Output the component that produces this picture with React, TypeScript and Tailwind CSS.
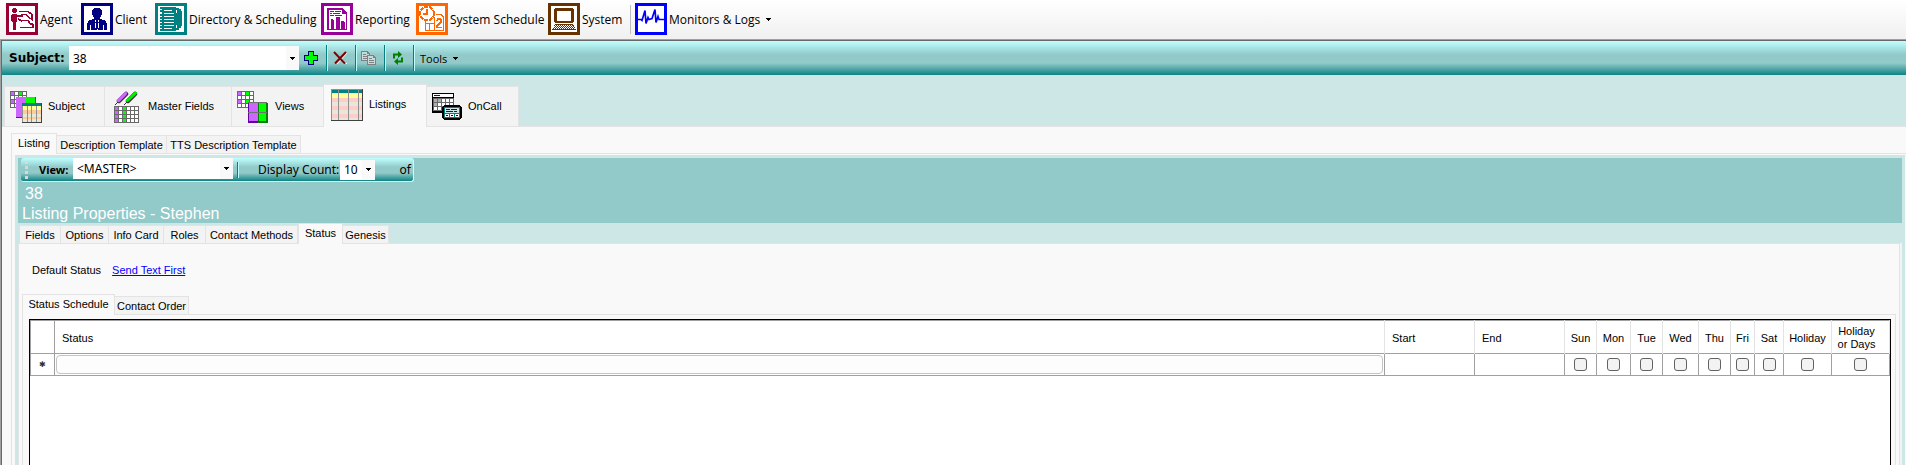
import React from "react";

type IconProps = { className?: string };

const px = { shapeRendering: "crispEdges" as const };

function AgentIcon() {
  return (
    <svg width="32" height="32" viewBox="0 0 32 32" {...px}>
      <path fill="#990033" d="M0 0h32v32H0z" />
      <path fill="#fff" d="M3 3h26v26H3z" />
      <path fill="#990033" d="M7 5h3v1h1v3h-1v1H7V9H6V6h1zM6 11h5v1h6v2h-6v5h-1v8H7v-8H6v-1H5v-6h1z" />
      <path fill="none" stroke="#990033" strokeWidth="1.6" d="M13 8.500h9l4 3v5l-3-2-3-3h-5M16 17.500h6l2 3 3 1v3H14M12 16l4 2" />
    </svg>
  );
}

function ClientIcon() {
  return (
    <svg width="32" height="32" viewBox="0 0 32 32" {...px}>
      <path fill="#000080" d="M0 0h32v32H0z" />
      <path fill="#fff" d="M3 3h26v26H3z" />
      <path fill="#000080" d="M13 5h6v1h1v1h1v5h-1v2h-1v2h2v1h3v1h1v2h1v7H6v-7h1v-2h1v-1h3v-1h2v-2h-1v-2h-1V7h1V6h1z" />
      <path fill="#fff" d="M14 17h1v1h2v-1h1v2h-1v1h1v5h-1v2h-2v-2h-1v-5h1v-1h-1z" />
      <path fill="#000080" d="M15 18h2v2h-1v7h-1zM15 20h2v6h-2z" />
      <path fill="#fff" d="M9 22h1v5H9zM22 22h1v5h-1z" />
    </svg>
  );
}

function DirectoryIcon() {
  return (
    <svg width="32" height="32" viewBox="0 0 32 32" {...px}>
      <path fill="#008080" d="M0 0h32v32H0z" />
      <path fill="#fff" d="M3 3h26v26H3z" />
      <path fill="#008080" d="M5 4h16v1h3v1h2v2h1v15h-1v2h-2v2h-3v1H5v-2h2v-1H5v-2h2v-1H5v-2h2v-1H5v-2h2v-1H5v-2h2v-1H5v-2h2V9H5V7h2V6H5z" />
      <path fill="#fff" d="M9 7h8v1H9zM9 10h10v1H9zM9 13h10v1H9zM9 16h10v1H9zM9 19h10v1H9zM9 22h10v1H9zM9 25h8v1H9z" />
      <path fill="#fff" d="M21 7h1v3h-1zM21 22h1v3h-1z" />
    </svg>
  );
}

function ReportingIcon() {
  return (
    <svg width="32" height="32" viewBox="0 0 32 32" {...px}>
      <path fill="#990099" d="M0 0h32v32H0z" />
      <path fill="#fff" d="M3 3h26v26H3z" />
      <path fill="#990099" d="M6 5h16v1h1v1h1v1h1v1h1v18H6z" />
      <path fill="#fff" d="M8 7h13v4h4v15h-1v-7h-3v7h-2V14h-3v12h-3v-9h-2v9H8z" />
      <path fill="#990099" d="M9 8h4v1H9zM14 8h6v1h-6zM9 10h2v1H9zM12 10h7v1h-7zM9 12h4v1H9zM14 12h7v1h-7zM10 16h2v10h-2zM15 14h3v12h-3zM20 18h3v8h-3zM21 6h1v5h-1z" />
    </svg>
  );
}

function ScheduleIcon() {
  return (
    <svg width="32" height="32" viewBox="0 0 32 32" {...px}>
      <path fill="#ff6600" d="M0 0h32v32H0z" />
      <path fill="#fff" d="M3 3h26v26H3z" />
      <path fill="none" stroke="#ff6600" strokeWidth="1.5" d="M9.500 18v9.500h18V14l-3-2.500h-5M18.500 14v13M13.500 20v7M9 20.500h9" />
      <circle cx="11" cy="10.500" r="7" fill="#fff" stroke="#ff6600" strokeWidth="2" strokeDasharray="4 1" />
      <path fill="#ff6600" d="M10 6h2v6H7v-2h3z" />
      <path fill="#ff6600" d="M21 15h4v1h1v4h-1v1h-1v1h-1v1h-1v1h4v1h-6v-3h1v-1h1v-1h1v-1h1v-2h-2v1h-2v-1h1z" />
    </svg>
  );
}

const keyboardDots = [0, 1, 2, 3]
  .flatMap((r) => Array.from({ length: 9 + r }, (_, c) => `M${7 - r + c * 2} ${22 + r}h1v1h-1z`))
  .join("");

function SystemIcon() {
  return (
    <svg width="32" height="32" viewBox="0 0 32 32" {...px}>
      <path fill="#663300" d="M0 0h32v32H0z" />
      <path fill="#fff" d="M3 3h26v26H3z" />
      <path fill="#663300" d="M7 5h18v1h1v13h-1v1H7v-1H6V6h1zM7 21h18v1h1v2h1v2h1v1H4v-1h1v-2h1v-2h1z" />
      <path fill="#fff" d="M9 8h14v10H9z" />
      <path fill="#fff" d={keyboardDots} />
    </svg>
  );
}

function MonitorIcon() {
  return (
    <svg width="32" height="32" viewBox="0 0 32 32">
      <path fill="#0000ff" d="M0 0h32v32H0z" />
      <path fill="#fff" d="M3 3h26v26H3z" />
      <path fill="none" stroke="#0000ff" strokeWidth="1.700" d="M3 16.500h3l1 1 3-10 1 13 2-6 1 2 3-1 3-9 1 13 2-6 1 3h5" />
    </svg>
  );
}

function PlusIcon() {
  return (
    <svg width="14" height="14" viewBox="0 0 14 14" {...px}>
      <path fill="#000080" d="M4 0h6v4h4v6h-4v4H4v-4H0V4h4z" />
      <path fill="#00ff00" d="M5 1h4v4h4v4H9v4H5V9H1V5h4z" />
    </svg>
  );
}

function DeleteIcon() {
  return (
    <svg width="15" height="14" viewBox="0 0 15 14">
      <path stroke="#fff" strokeWidth="1" d="M3 2l11 11M14 2L4 13" />
      <path stroke="#800000" strokeWidth="2" d="M1 1l11 11.500M13 1L2 12.500" />
    </svg>
  );
}

function CopyIcon() {
  return (
    <svg width="16" height="14" viewBox="0 0 16 14" {...px}>
      <path fill="#808080" d="M0 0h7v1h1v1h1v8H0z" />
      <path fill="#c3dcdc" d="M1 1h5v2h2v6H1z" />
      <path fill="#808080" d="M2 3h3v1H2zM2 5h4v1H2zM2 7h4v1H2zM6 4h7v1h1v1h1v8H6z" />
      <path fill="#c3dcdc" d="M7 5h5v2h2v6H7z" />
      <path fill="#808080" d="M8 7h3v1H8zM8 9h5v1H8zM8 11h5v1H8z" />
    </svg>
  );
}

function RefreshIcon() {
  return (
    <svg width="12" height="14" viewBox="0 0 12 14">
      <path fill="none" stroke="#008000" strokeWidth="2" d="M2 7.500V3.500h5M10 6.500v4H5" />
      <path fill="#008000" d="M6 0l4 3.500L6 7zM6 7l-4 3.500L6 14z" />
    </svg>
  );
}

function Lattice({ x, y, cols, rows, s }: { x: number; y: number; cols: number; rows: number; s: number }) {
  let d = "";
  for (let c = 0; c <= cols; c++) d += `M${x + c * s} ${y}h1v${rows * s + 1}h-1z`;
  for (let r = 0; r <= rows; r++) d += `M${x} ${y + r * s}h${cols * s + 1}v1h-${cols * s + 1}z`;
  return (
    <>
      <path fill="#fff" d={`M${x} ${y}h${cols * s}v${rows * s}h-${cols * s}z`} />
      <path fill="#696969" d={d} />
    </>
  );
}

function SubjectIcon() {
  return (
    <svg width="32" height="32" viewBox="0 0 32 32" {...px}>
      <Lattice x={0} y={0} cols={4} rows={4} s={4} />
      <path fill="#cc66ff" d="M1 1h3v3H1zM1 9h3v3H1z" />
      <path fill="#00ff00" d="M9 1h3v3H9z" />
      <path fill="#cc66ff" d="M6 6h10v20H6z" />
      <path fill="#00ff00" d="M16 6h9v8h-9z" />
      <path fill="#8000b0" d="M6 26h7v1H6z" />
      <path fill="#008000" d="M25 6h1v8h-1z" />
      <path fill="#404040" d="M12 12h20v20H12z" />
      <path fill="#008080" d="M12 12h19v3H12z" />
      <path fill="#ffff99" d="M13 15h18v4H13z" />
      <path fill="#ffcc99" d="M13 19h18v4H13zM13 26h18v2H13z" />
      <path fill="#e8e8d8" d="M13 23h18v3H13zM13 28h18v3H13z" />
      <path fill="#909090" d="M12 15h1v16h-1zM17 15h1v16h-1zM21 15h1v16h-1zM26 15h1v16h-1z" />
    </svg>
  );
}

function MasterIcon() {
  return (
    <svg width="26" height="32" viewBox="0 0 26 32">
      <path stroke="#303030" strokeWidth="4.500" strokeLinecap="round" d="M5 10l7-7M14 10l7-7" />
      <path stroke="#cc66ff" strokeWidth="3.200" strokeLinecap="round" d="M4.500 9.500L11.500 2.500" />
      <path stroke="#00ee00" strokeWidth="3" strokeLinecap="round" d="M13.500 9.500L21.500 2" />
      <path stroke="#303030" d="M1 14l3-3M10 14l3-3" />
      <g {...px}>
        <Lattice x={0} y={15} cols={6} rows={4} s={4} />
        <path fill="#cc66ff" d="M1 16h3v3H1zM1 20h3v3H1zM1 24h3v3H1zM1 28h3v3H1z" />
        <path fill="#00ff00" d="M9 16h3v3H9zM9 20h3v3H9zM9 24h3v3H9zM9 28h3v3H9z" />
      </g>
    </svg>
  );
}

function ViewsIcon() {
  return (
    <svg width="32" height="32" viewBox="0 0 32 32" {...px}>
      <Lattice x={0} y={0} cols={4} rows={4} s={4} />
      <path fill="#cc66ff" d="M1 1h3v3H1zM1 9h3v3H1z" />
      <path fill="#00ff00" d="M9 1h3v3H9zM9 9h3v3H9z" />
      <path fill="#6600aa" d="M11 12h11v20H11z" />
      <path fill="#008000" d="M21 12h10v20H21z" />
      <path fill="#cc66ff" d="M12 12h9v18h-9z" />
      <path fill="#00ff00" d="M22 12h7v18h-7z" />
      <path fill="#707070" d="M11 21h19v1H11zM11 11h19v1H11z" />
    </svg>
  );
}

function ListingsIcon() {
  return (
    <svg width="32" height="32" viewBox="0 0 32 32" {...px}>
      <path fill="#404040" d="M0 0h32v32H0z" />
      <path fill="#e8e8d8" d="M0 1h31v30H0z" />
      <path fill="#008080" d="M0 1h31v3H0z" />
      <path fill="#ffff99" d="M0 5h31v4H0z" />
      <path fill="#ffcccc" d="M0 9h31v4H0zM0 17h31v4H0zM0 25h31v4H0z" />
      <path fill="#909090" d="M0 0h1v31H0zM7 0h1v31H7zM17 0h1v31h-1zM27 0h1v31h-1zM0 0h31v1H0z" />
    </svg>
  );
}

function OnCallIcon() {
  return (
    <svg width="30" height="28" viewBox="0 0 30 28" {...px}>
      <path fill="#000" d="M0 0h22v20H0z" />
      <path fill="#fff" d="M1 1h20v3H1z" />
      <path fill="#0000ff" d="M2 2h6v1H2z" />
      <Lattice x={1} y={5} cols={5} rows={3} s={4} />
      <path fill="#b0b0b0" d="M2 6h3v3H2zM6 6h3v3H6zM2 10h3v3H2z" />
      <path fill="#000" d="M12 12h16v1h1v1h1v11h-1v1h-1v1H12v-1h-1v-1h-1V14h1v-1h1z" />
      <path fill="#008080" d="M12 14h16v11H12z" />
      <path fill="#cde6e6" d="M13 15h14v5H13z" />
      <path fill="#0000ff" d="M14 16h4v1h-4zM19 16h6v1h-6zM14 18h7v1h-7zM22 18h3v1h-3z" />
      <path fill="#fff" d="M13 21h4v3h-4zM18 21h4v3h-4zM23 21h4v3h-4z" />
      <path fill="#000080" d="M14 22h2v1h-2zM19 22h2v1h-2zM24 22h2v1h-2z" />
    </svg>
  );
}

function Arrow({ className = "" }: IconProps) {
  return (
    <svg className={className} width="5" height="3" viewBox="0 0 5 3" {...px}>
      <path d="M0 0h5v1H4v1H3v1H2V2H1V1H0z" fill="#000" />
    </svg>
  );
}

type ComboProps = { label: string; id: string; value: string; className: string; boxClass: string };

function Combo({ label, id, value, className, boxClass }: ComboProps) {
  return (
    <>
      <label htmlFor={id} className={className}>{label}</label>
      <span className={`relative flex shrink-0 items-center bg-white ${boxClass}`}>
        <select id={id} defaultValue={value} className="h-full w-full appearance-none bg-transparent pl-1 font-['Noto_Sans',sans-serif] text-[12px] text-black outline-none">
          <option>{value}</option>
        </select>
        <span className="pointer-events-none absolute inset-y-0 right-0 flex w-[13px] items-center justify-center bg-[#f9f9f9]">
          <Arrow />
        </span>
      </span>
    </>
  );
}

function Divider() {
  return <span className="block h-[26px] w-0.5 shrink-0 border-l border-[#008080] bg-[#c0ffff]" />;
}

type TabDef = { label: string; width: string; active?: boolean };

function SmallTabs({ tabs }: { tabs: TabDef[] }) {
  return (
    <div role="tablist" className="flex items-end">
      {tabs.map((t) => (
        <button
          key={t.label}
          role="tab"
          aria-selected={!!t.active}
          className={
            t.active
              ? `relative -mb-px h-[21px] border border-b-0 border-[#e3e3e3] bg-[#f9f9f9] pb-0.5 whitespace-nowrap ${t.width}`
              : `h-[18px] border border-b-0 border-l-0 border-[#e3e3e3] bg-[#f3f3f3] pt-0.5 whitespace-nowrap ${t.width}`
          }
        >
          {t.label}
        </button>
      ))}
    </div>
  );
}

const menu = [
  { label: "Agent", Icon: AgentIcon, width: "w-[75px]" },
  { label: "Client", Icon: ClientIcon, width: "w-[74px]" },
  { label: "Directory & Scheduling", Icon: DirectoryIcon, width: "w-[166px]" },
  { label: "Reporting", Icon: ReportingIcon, width: "w-[95px]" },
  { label: "System Schedule", Icon: ScheduleIcon, width: "w-[132px]" },
  { label: "System", Icon: SystemIcon, width: "w-[82px]" },
];

const tools = [
  { label: "Add", Icon: PlusIcon },
  { label: "Delete", Icon: DeleteIcon },
  { label: "Copy", Icon: CopyIcon },
  { label: "Refresh", Icon: RefreshIcon },
];

const mainTabs = [
  { label: "Subject", Icon: SubjectIcon, cls: "w-[101px] gap-1.5 pl-[5px] border-l" },
  { label: "Master Fields", Icon: MasterIcon, cls: "w-[127px] gap-2 pl-[9px]" },
  { label: "Views", Icon: ViewsIcon, cls: "w-[92px] gap-1.5 pl-[5px]" },
  { label: "Listings", Icon: ListingsIcon, cls: "w-[103px] gap-1.5 pl-[7px]", active: true },
  { label: "OnCall", Icon: OnCallIcon, cls: "w-[92px] gap-1.5 pl-[5px]" },
];

const days = [
  { label: "Sun", width: "w-[32px]" },
  { label: "Mon", width: "w-[34px]" },
  { label: "Tue", width: "w-[32px]" },
  { label: "Wed", width: "w-[36px]" },
  { label: "Thu", width: "w-[32px]" },
  { label: "Fri", width: "w-[24px]" },
  { label: "Sat", width: "w-[29px]" },
  { label: "Holiday", width: "w-[48px]" },
  { label: "Holiday or Days", width: "w-[58px] pr-2" },
];

export default function App() {
  return (
    <div className="flex h-screen flex-col overflow-hidden bg-[#cde6e6] font-['Liberation_Sans',Arial,sans-serif] text-[11px] leading-[13px] text-black">
      <nav className="flex h-[39px] shrink-0 items-start bg-linear-to-b from-white to-[#f0f0f0] pt-[3px] pl-1.5 font-['Open_Sans','Noto_Sans',sans-serif] text-[12px]">
        {menu.map(({ label, Icon, width }) => (
          <button key={label} className={`flex h-8 items-center gap-0.5 whitespace-nowrap ${width}`}>
            <Icon />
            {label}
          </button>
        ))}
        <span className="mt-0.5 mr-1 h-[29px] w-px bg-[#bdbdbd]" />
        <button className="flex h-8 items-center gap-0.5 whitespace-nowrap">
          <MonitorIcon />
          Monitors &amp; Logs
          <Arrow className="ml-1" />
        </button>
      </nav>

      <div className="flex min-h-0 flex-1 flex-col border-t border-l border-[#a0a0a0]">
        <div className="flex min-h-0 flex-1 flex-col border-t border-l border-[#696969]">
          <div className="flex h-[34px] shrink-0 items-center bg-[linear-gradient(#c0ffff,#92c9c9_40%,#92c9c9_65%,#0c8484)] pl-[7px]">
            <Combo id="subject" label="Subject:" value="38" className="w-[60px] font-['DejaVu_Sans',sans-serif] text-[12px] font-bold" boxClass="h-6 w-[230px]" />
            <div className="flex items-center">
              {tools.map(({ label, Icon }) => (
                <React.Fragment key={label}>
                  <button aria-label={label} className="flex w-[27px] shrink-0 justify-center pr-[3px]"><Icon /></button>
                  <Divider />
                </React.Fragment>
              ))}
              <button className="flex items-center gap-1.5 pl-[5px] font-['Open_Sans','Noto_Sans',sans-serif] text-[11px]">
                Tools <Arrow />
              </button>
            </div>
          </div>

          <div role="tablist" className="flex h-[51px] shrink-0 items-end pl-0.5">
            {mainTabs.map(({ label, Icon, cls, active }) => (
              <button
                key={label}
                role="tab"
                aria-selected={!!active}
                className={
                  active
                    ? `relative -mb-px flex h-[43px] items-center border-t border-r border-[#e3e3e3] bg-[#f9f9f9] pb-[3px] whitespace-nowrap ${cls}`
                    : `flex h-10 items-center border-t border-r border-[#e3e3e3] bg-[#f3f3f3] whitespace-nowrap ${cls}`
                }
              >
                <Icon />
                {label}
              </button>
            ))}
          </div>

          <div className="flex min-h-0 flex-1 flex-col border-t border-[#e3e3e3] bg-[#f9f9f9] pt-[6px] pl-[9px]">
            <SmallTabs
              tabs={[
                { label: "Listing", width: "w-[46px]", active: true },
                { label: "Description Template", width: "w-[110px]" },
                { label: "TTS Description Template", width: "w-[134px]" },
              ]}
            />
            <div className="flex min-h-0 flex-1 flex-col border-t border-l border-[#e3e3e3] pt-px pr-px pl-[3px]">
              <div className="flex min-h-0 flex-1 flex-col bg-[#cde6e6] px-[3px] pt-[3px]">
                <header className="h-[65px] shrink-0 bg-[#92c9c9] pl-[3px] text-white">
                  <div className="flex h-6 w-[393px] items-center rounded-[3px] border-r border-b border-[#c0ffff] bg-[linear-gradient(#c0ffff,#92c9c9_40%,#92c9c9_65%,#0c8484)] pl-1 font-['Noto_Sans',sans-serif] text-[12px] text-black">
                    <span className="mr-[11px] flex w-[3px] shrink-0 flex-col gap-0.5">
                      {[0, 1, 2, 3].map((n) => (
                        <span key={n} className="size-[3px] bg-[#d8d8d8]" />
                      ))}
                    </span>
                    <Combo id="view" label="View:" value="<MASTER>" className="w-[34px] text-[11px] font-bold" boxClass="h-[21px] w-[160px] self-start" />
                    <span className="mr-[19px] ml-[4px] h-4 w-0.5 shrink-0 border-l border-[#008080] bg-[#c0ffff]" />
                    <Combo id="count" label="Display Count:" value="10" className="w-[82px] whitespace-nowrap" boxClass="h-5 w-[35px]" />
                    <span className="ml-auto pr-0.5">of</span>
                  </div>
                  <p className="pt-0.5 pl-1 text-[16px] leading-5">38</p>
                  <h1 className="pl-px text-[16px] leading-5">Listing Properties - Stephen</h1>
                </header>

                <div className="flex h-5 shrink-0 items-end pl-0.5">
                  <SmallTabs
                    tabs={[
                      { label: "Fields", width: "w-[41px]" },
                      { label: "Options", width: "w-[48px]" },
                      { label: "Info Card", width: "w-[55px]" },
                      { label: "Roles", width: "w-[42px]" },
                      { label: "Contact Methods", width: "w-[92px]" },
                      { label: "Status", width: "w-[45px]", active: true },
                      { label: "Genesis", width: "w-[46px]" },
                    ]}
                  />
                </div>
                <div className="flex min-h-0 flex-1 flex-col bg-[#f3f3f3] pr-0.5">
                  <div className="flex min-h-0 flex-1 flex-col border border-b-0 border-[#e3e3e3] bg-[#f9f9f9] pr-[3px] pl-[3px]">
                    <p className="flex h-[50px] shrink-0 items-center gap-[11px] pt-0.5 pl-[10px]">
                      <span>Default Status</span>
                      <a href="#status" className="text-[#0000ff] underline">Send Text First</a>
                    </p>
                    <SmallTabs
                      tabs={[
                        { label: "Status Schedule", width: "w-[93px]", active: true },
                        { label: "Contact Order", width: "w-[74px]" },
                      ]}
                    />
                    <div className="flex min-h-0 flex-1 flex-col border border-b-0 border-[#e3e3e3] pt-1 pr-1 pl-1.5">
                      <div className="min-h-0 flex-1 border border-b-0 border-black bg-white">
                        <table className="w-full table-fixed border-collapse border border-[#a0a0a0] text-left">
                          <thead>
                            <tr className="h-[33px] border-b border-[#a0a0a0]">
                              <th aria-label="Row" className="w-[24px] border-r border-[#a0a0a0]" />
                              <th className="border-r border-[#e3e3e3] pt-0.5 pl-[7px] font-normal">Status</th>
                              <th className="w-[90px] border-r border-[#e3e3e3] pt-0.5 pl-[7px] font-normal">Start</th>
                              <th className="w-[90px] border-r border-[#e3e3e3] pt-0.5 pl-[7px] font-normal">End</th>
                              {days.map((d) => (
                                <th key={d.label} className={`border-r border-[#e3e3e3] pt-0.5 text-center font-normal ${d.width}`}>{d.label}</th>
                              ))}
                            </tr>
                          </thead>
                          <tbody>
                            <tr className="h-[22px]">
                              <td className="border-r border-[#a0a0a0] text-center text-[8px] text-[#303030]">✱</td>
                              <td className="border-r border-[#a0a0a0] p-px">
                                <input aria-label="Status" className="block h-[19px] w-full rounded-[4px] border border-[#c4c4c4] bg-[#fdfdfd] outline-none" />
                              </td>
                              <td className="border-r border-[#a0a0a0]" />
                              <td className="border-r border-[#a0a0a0]" />
                              {days.map((d) => (
                                <td key={d.label} className="border-r border-[#a0a0a0]">
                                  <input type="checkbox" aria-label={d.label} className="mx-auto block size-[13px] appearance-none rounded-[3px] border border-[#626262] bg-[#f3f3f3]" />
                                </td>
                              ))}
                            </tr>
                          </tbody>
                        </table>
                      </div>
                    </div>
                  </div>
                </div>
              </div>
            </div>
          </div>
        </div>
      </div>
    </div>
  );
}
